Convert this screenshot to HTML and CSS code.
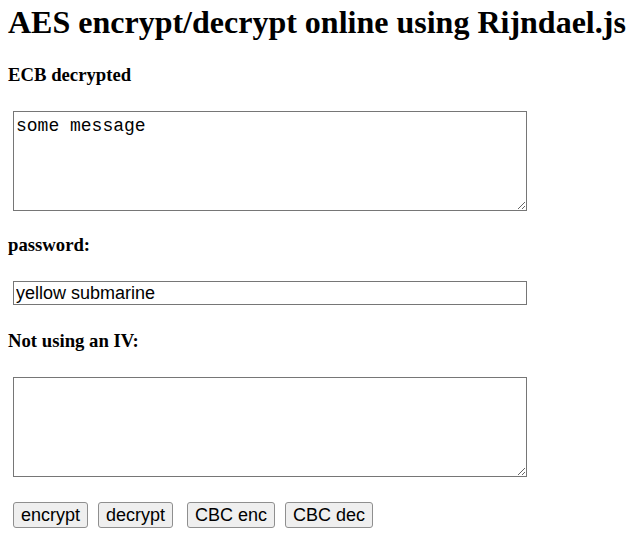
FILE: index.html
```html
<!DOCTYPE html>
<html>
<head>
<meta charset="utf-8">
<title>AES encrypt/decrypt online using Rijndael.js</title>
<link rel="stylesheet" href="styles.css">
</head>
<body>
<h1 class="title">AES encrypt/decrypt online using Rijndael.js</h1>
<h3 class="label">ECB decrypted</h3>
<div class="field field-first"><textarea class="box">some message</textarea></div>
<h3 class="label">password:</h3>
<div class="field field-pass"><input class="line" type="text" value="yellow submarine"></div>
<h3 class="label">Not using an IV:</h3>
<div class="field field-last"><textarea class="box"></textarea></div>
<div class="buttons">
  <button class="btn">encrypt</button>
  <button class="btn">decrypt</button>
  <button class="btn wide-gap">CBC enc</button>
  <button class="btn">CBC dec</button>
</div>
</body>
</html>
```
FILE: styles.css
```css
html, body {
  background: #ffffff;
}
body {
  margin: 0;
  padding: 4px 8px;
  font-family: "Liberation Serif", "Times New Roman", serif;
  color: #000;
}
.title {
  margin: 0 0 23px;
  font-size: 32px;
  font-weight: bold;
  line-height: normal;
}
.label {
  margin: 0;
  font-size: 18.72px;
  font-weight: bold;
  line-height: normal;
}
.field {
  margin: 25px 0 23px 5px;
  line-height: 0;
}
.field-pass {
  margin-bottom: 25px;
}
.field-last {
  margin-bottom: 25px;
}
.box {
  box-sizing: border-box;
  width: 514px;
  height: 100px;
  margin: 0;
  padding: 4px 2px 2px;
  border: 1px solid #767676;
  border-radius: 0;
  font-family: "Liberation Mono", "Courier New", monospace;
  font-size: 18px;
  line-height: normal;
  color: #000;
  background: #fff;
}
.line {
  box-sizing: border-box;
  width: 514px;
  height: 24px;
  margin: 0;
  padding: 1px 2px;
  border: 1px solid #767676;
  border-radius: 0;
  font-family: "Liberation Sans", Arial, sans-serif;
  font-size: 18px;
  color: #000;
  background: #fff;
}
.buttons {
  display: flex;
  gap: 10px;
  margin-left: 5px;
}
.btn {
  box-sizing: border-box;
  height: 26px;
  margin: 0;
  padding: 0 7px;
  border: 1px solid #8f8f8f;
  border-radius: 3px;
  background: #efefef;
  font-family: "Liberation Sans", Arial, sans-serif;
  font-size: 18px;
  color: #000;
}
.wide-gap {
  margin-left: 4px;
}
```
